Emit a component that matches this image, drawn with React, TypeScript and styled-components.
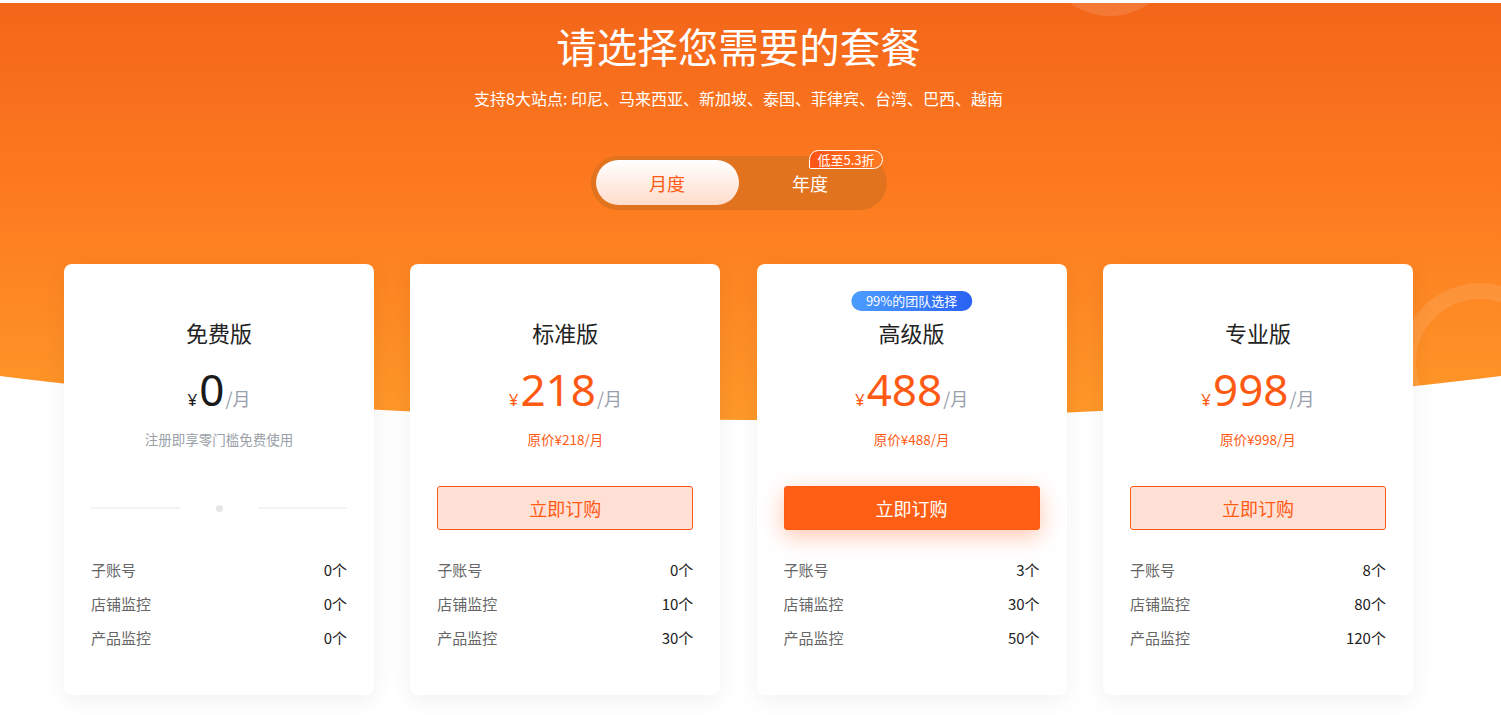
import React, { useState } from "react";
import styled, { createGlobalStyle } from "styled-components";

const GlobalStyle = createGlobalStyle`
  html, body {
    margin: 0;
    padding: 0;
    background: #fff;
  }
  body {
    font-family: "Noto Sans", "Noto Sans CJK SC", sans-serif;
    color: #333;
  }
  * {
    box-sizing: border-box;
  }
`;

interface Plan {
  name: string;
  price: number;
  note: string;
  free?: boolean;
  featured?: boolean;
  badge?: string;
  features: [string, string][];
}

const plans: Plan[] = [
  {
    name: "免费版",
    price: 0,
    note: "注册即享零门槛免费使用",
    free: true,
    features: [
      ["子账号", "0个"],
      ["店铺监控", "0个"],
      ["产品监控", "0个"],
    ],
  },
  {
    name: "标准版",
    price: 218,
    note: "原价¥218/月",
    features: [
      ["子账号", "0个"],
      ["店铺监控", "10个"],
      ["产品监控", "30个"],
    ],
  },
  {
    name: "高级版",
    price: 488,
    note: "原价¥488/月",
    featured: true,
    badge: "99%的团队选择",
    features: [
      ["子账号", "3个"],
      ["店铺监控", "30个"],
      ["产品监控", "50个"],
    ],
  },
  {
    name: "专业版",
    price: 998,
    note: "原价¥998/月",
    features: [
      ["子账号", "8个"],
      ["店铺监控", "80个"],
      ["产品监控", "120个"],
    ],
  },
];

const App: React.FC = () => {
  const [period, setPeriod] = useState<"month" | "year">("month");

  return (
    <Page>
      <GlobalStyle />
      <Hero>
        <TopBubble />
        <SideRing />
        <Inner>
          <Title>请选择您需要的套餐</Title>
          <Subtitle>
            支持8大站点: 印尼、马来西亚、新加坡、泰国、菲律宾、台湾、巴西、越南
          </Subtitle>
          <Toggle>
            <ToggleItem
              $active={period === "month"}
              onClick={() => setPeriod("month")}
            >
              月度
            </ToggleItem>
            <ToggleItem
              $active={period === "year"}
              onClick={() => setPeriod("year")}
            >
              年度
            </ToggleItem>
            <Discount>低至5.3折</Discount>
          </Toggle>
        </Inner>
      </Hero>

      <Cards>
        {plans.map((p) => (
          <Card key={p.name}>
            {p.badge && <TeamBadge>{p.badge}</TeamBadge>}
            <PlanName>{p.name}</PlanName>
            <PriceRow $free={p.free}>
              <Yen>¥</Yen>
              <Amount>{p.price}</Amount>
              <Unit>/月</Unit>
            </PriceRow>
            <Note $free={p.free}>{p.note}</Note>
            {p.free ? (
              <Divider>
                <Line />
                <Dot />
                <Line />
              </Divider>
            ) : (
              <BuyButton $featured={p.featured}>立即订购</BuyButton>
            )}
            <Features>
              {p.features.map(([label, value]) => (
                <FeatureRow key={label}>
                  <span>{label}</span>
                  <Value>{value}</Value>
                </FeatureRow>
              ))}
            </Features>
          </Card>
        ))}
      </Cards>
    </Page>
  );
};

const Page = styled.div`
  padding-top: 3px;
  min-height: 715px;
  overflow: hidden;
`;

const Hero = styled.section`
  position: relative;
  height: 417px;
  background: linear-gradient(180deg, #f3661a 0%, #fd7a1f 45%, #fe9829 100%);
  clip-path: ellipse(1500px 328px at 50% 89px);
  overflow: hidden;
`;

const TopBubble = styled.div`
  position: absolute;
  left: 1042px;
  top: -123px;
  width: 136px;
  height: 136px;
  border-radius: 50%;
  background: rgba(255, 255, 255, 0.12);
`;

const SideRing = styled.div`
  position: absolute;
  left: 1400px;
  top: 280px;
  width: 160px;
  height: 160px;
  border-radius: 50%;
  border: 16px solid rgba(255, 255, 255, 0.1);
`;

const Inner = styled.div`
  position: relative;
  padding: 19px 24px 0 0;
  display: flex;
  flex-direction: column;
  align-items: center;
`;

const Title = styled.h1`
  margin: 0;
  font-family: "Noto Sans CJK SC", sans-serif;
  font-size: 40.5px;
  line-height: 48px;
  font-weight: 400;
  color: #fff;
`;

const Subtitle = styled.p`
  margin: 17px 0 0;
  font-family: "Noto Sans CJK SC", sans-serif;
  font-size: 16px;
  line-height: 22px;
  color: #fff;
`;

const Toggle = styled.div`
  position: relative;
  margin-top: 47px;
  width: 296px;
  height: 54px;
  padding: 4px 5px;
  border-radius: 27px;
  background: #e1731f;
  display: flex;
`;

const ToggleItem = styled.div<{ $active?: boolean }>`
  width: 144px;
  height: 45px;
  border-radius: 23px;
  display: flex;
  align-items: center;
  justify-content: center;
  font-family: "Noto Sans CJK SC", sans-serif;
  font-size: 18px;
  cursor: pointer;
  color: ${(p) => (p.$active ? "#ff5a14" : "#fff")};
  background: ${(p) =>
    p.$active ? "linear-gradient(180deg, #ffffff 0%, #ffdccb 100%)" : "transparent"};
`;

const Discount = styled.span`
  position: absolute;
  top: -6px;
  right: 4px;
  height: 19px;
  padding: 0 7px;
  border: 1px solid #fff;
  border-radius: 10px 10px 10px 2px;
  background: linear-gradient(90deg, #ff5314 0%, #ff7a22 100%);
  color: #fff;
  font-family: "Noto Sans CJK SC", sans-serif;
  font-size: 13px;
  line-height: 17px;
`;

const Cards = styled.div`
  margin: -156px 0 0 64px;
  width: 1349px;
  display: grid;
  grid-template-columns: repeat(4, 310px);
  column-gap: 36.3px;
  position: relative;
`;

const Card = styled.div`
  position: relative;
  height: 431px;
  padding: 53px 27px 0;
  background: #fff;
  border-radius: 8px;
  box-shadow: 0 6px 24px rgba(0, 0, 0, 0.06);
  display: flex;
  flex-direction: column;
  align-items: stretch;
`;

const TeamBadge = styled.span`
  position: absolute;
  top: 27px;
  left: 50%;
  transform: translateX(-50%);
  height: 20px;
  padding: 0 15px;
  border-radius: 10px;
  background: linear-gradient(90deg, #4c9dff 0%, #2a62f4 100%);
  color: #fff;
  font-family: "Noto Sans CJK SC", sans-serif;
  font-size: 13px;
  line-height: 20px;
  white-space: nowrap;
`;

const PlanName = styled.div`
  text-align: center;
  font-family: "Noto Sans CJK SC", sans-serif;
  font-size: 22px;
  line-height: 30px;
  color: #222;
`;

const PriceRow = styled.div<{ $free?: boolean }>`
  margin-top: 17px;
  height: 50px;
  display: flex;
  justify-content: center;
  align-items: baseline;
  color: ${(p) => (p.$free ? "#1a1a1a" : "#ff5a14")};
`;

const Yen = styled.span`
  font-family: "Noto Sans", "Noto Sans CJK SC", sans-serif;
  font-size: 17px;
  margin-right: 2px;
`;

const Amount = styled.span`
  font-family: "Noto Sans", sans-serif;
  font-size: 44px;
  line-height: 50px;
`;

const Unit = styled.span`
  font-family: "Noto Sans CJK SC", sans-serif;
  font-size: 18px;
  color: #98a0ad;
  margin-left: 1px;
`;

const Note = styled.div<{ $free?: boolean }>`
  margin-top: 15px;
  text-align: center;
  font-family: "Noto Sans CJK SC", sans-serif;
  font-size: 13.5px;
  line-height: 20px;
  color: ${(p) => (p.$free ? "#9a9fa8" : "#ff5a14")};
`;

const BuyButton = styled.button<{ $featured?: boolean }>`
  margin-top: 37px;
  height: 44px;
  width: 100%;
  border-radius: 3px;
  border: 1px solid #ff5a14;
  font-family: "Noto Sans CJK SC", sans-serif;
  font-size: 18px;
  cursor: pointer;
  color: ${(p) => (p.$featured ? "#fff" : "#ff5a14")};
  background: ${(p) => (p.$featured ? "#ff5f14" : "#ffe0d4")};
  box-shadow: ${(p) =>
    p.$featured ? "0 6px 22px rgba(255, 90, 20, 0.35)" : "none"};
`;

const Divider = styled.div`
  margin-top: 37px;
  height: 44px;
  display: flex;
  align-items: center;
  justify-content: space-between;
`;

const Line = styled.span`
  width: 89px;
  height: 2px;
  background: #f3f3f3;
`;

const Dot = styled.span`
  width: 7px;
  height: 7px;
  border-radius: 50%;
  background: #e6e6e6;
`;

const Features = styled.div`
  margin-top: 22px;
  display: flex;
  flex-direction: column;
`;

const FeatureRow = styled.div`
  height: 34px;
  display: flex;
  align-items: center;
  justify-content: space-between;
  font-family: "Noto Sans CJK SC", sans-serif;
  font-size: 15px;
  color: #666;
`;

const Value = styled.span`
  color: #222;
`;

export default App;
